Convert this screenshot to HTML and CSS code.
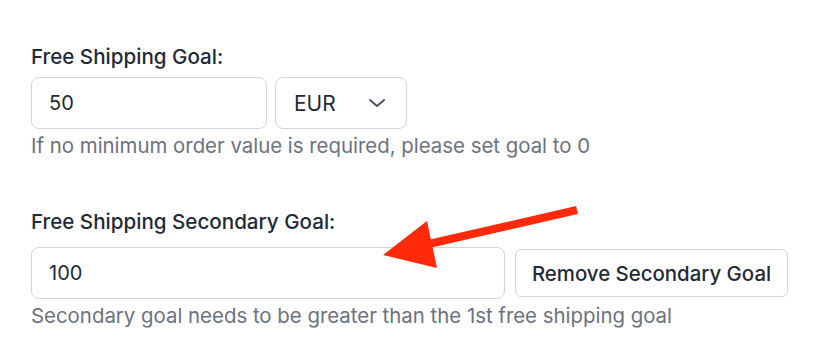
FILE: index.html
```html
<!DOCTYPE html>
<html lang="en">
<head>
  <meta charset="UTF-8" />
  <title>Free Shipping Goal</title>
  <link rel="stylesheet" href="styles.css">
</head>
<body>

  <div class="champ">
    <label class="libelle">Free Shipping Goal:</label>
    <div class="ligne">
      <div class="saisie saisie-courte">50</div>
      <div class="choix">EUR
        <svg class="chevron" width="18" height="10" viewBox="0 0 18 10">
          <path d="M2 2 L9 8 L16 2" fill="none" stroke="#4b5563" stroke-width="2" stroke-linecap="round" stroke-linejoin="round"/>
        </svg>
      </div>
    </div>
    <div class="aide">If no minimum order value is required, please set goal to 0</div>
  </div>

  <div class="champ champ-second">
    <label class="libelle libelle-second">Free Shipping Secondary Goal:</label>
    <div class="ligne ligne-large">
      <div class="saisie saisie-longue">100</div>
      <button class="btn-retirer">Remove Secondary Goal</button>
    </div>
    <div class="aide">Secondary goal needs to be greater than the 1st free shipping goal</div>
  </div>

  <svg class="fleche" width="832" height="354" viewBox="0 0 832 354">
    <line x1="577" y1="210" x2="420" y2="246" stroke="#ff2a0a" stroke-width="8" stroke-linecap="butt"/>
    <polygon points="383,255 427,221 437,268" fill="#ff2a0a"/>
  </svg>

</body>
</html>
```

FILE: styles.css
```css
body {
  font-family: Inter, "Noto Sans", sans-serif;
  background: #ffffff;
  color: #1f2937;
  margin: 0;
  padding: 44px 31px 0;
  position: relative;
}
.champ {
  display: flex;
  flex-direction: column;
}
.champ-second {
  margin-top: 50px;
}
.libelle {
  font-size: 20.6px;
  font-weight: 500;
  line-height: 26px;
  margin-bottom: 7px;
}
.libelle-second {
  margin-bottom: 12px;
}
.ligne {
  display: flex;
  align-items: center;
  gap: 8px;
}
.ligne-large {
  gap: 10px;
}
.saisie, .choix {
  box-sizing: border-box;
  height: 52px;
  border: 1px solid #d1d5db;
  border-radius: 8px;
  font-size: 20px;
  display: flex;
  align-items: center;
  padding-left: 17px;
}
.saisie-courte {
  width: 236px;
}
.saisie-longue {
  width: 474px;
}
.choix {
  width: 132px;
  font-size: 21px;
  justify-content: space-between;
  padding: 0 20px 0 18px;
}
.chevron {
  display: block;
}
.btn-retirer {
  box-sizing: border-box;
  height: 48px;
  width: 273px;
  background: #ffffff;
  border: 1px solid #d1d5db;
  border-radius: 6px;
  font-family: inherit;
  font-size: 20.4px;
  font-weight: 500;
  color: #1f2937;
  cursor: pointer;
}
.aide {
  margin-top: 4px;
  font-size: 20.4px;
  line-height: 26px;
  color: #6b7280;
}
.fleche {
  position: absolute;
  top: 0;
  left: 0;
  pointer-events: none;
}
```
